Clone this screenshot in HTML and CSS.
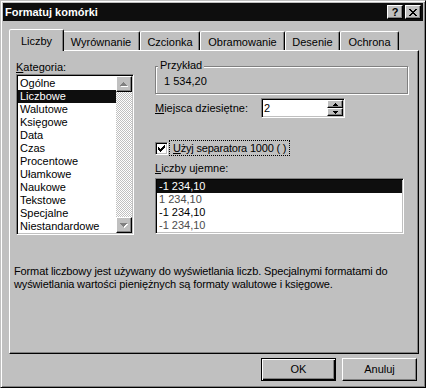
FILE: index.html
```html
<!DOCTYPE html>
<html lang="pl">
<head>
<meta charset="utf-8">
<title>Formatuj komórki</title>
<link rel="stylesheet" href="styles.css">
</head>
<body>
<div class="window">
  <div class="titlebar">
    <span class="title">Formatuj komórki</span>
    <div class="title-btns">
      <span class="tbtn help">?</span>
      <span class="tbtn close"><svg width="8" height="7" viewBox="0 0 8 7" shape-rendering="crispEdges"><path d="M0 0h2v1H0z M6 0h2v1H6z M1 1h2v1H1z M5 1h2v1H5z M2 2h4v1H2z M3 3h2v1H3z M2 4h4v1H2z M1 5h2v1H1z M5 5h2v1H5z M0 6h2v1H0z M6 6h2v1H6z" fill="#000"/></svg></span>
    </div>
  </div>
  <div class="content">
    <div class="tabs">
      <div class="tab active t-liczby">Liczby</div>
      <div class="tab t-wyr">Wyrównanie</div>
      <div class="tab t-czc">Czcionka</div>
      <div class="tab t-obr">Obramowanie</div>
      <div class="tab t-des">Desenie</div>
      <div class="tab t-och">Ochrona</div>
    </div>
    <div class="panel">
      <div class="cols">
        <div class="col-left">
          <div class="label"><u>K</u>ategoria:</div>
          <div class="listbox cat">
            <ul class="items">
              <li>Ogólne</li>
              <li class="sel">Liczbowe</li>
              <li>Walutowe</li>
              <li>Księgowe</li>
              <li>Data</li>
              <li>Czas</li>
              <li>Procentowe</li>
              <li>Ułamkowe</li>
              <li>Naukowe</li>
              <li>Tekstowe</li>
              <li>Specjalne</li>
              <li>Niestandardowe</li>
            </ul>
            <div class="vscroll">
              <span class="sbtn"><svg width="8" height="5" viewBox="0 0 8 5" shape-rendering="crispEdges"><path d="M4 1h1v1H4z M3 2h3v1H3z M2 3h5v1H2z M1 4h7v1H1z" fill="#fff"/><path d="M3 0h1v1H3z M2 1h3v1H2z M1 2h5v1H1z M0 3h7v1H0z" fill="#808080"/></svg></span>
              <span class="track"></span>
              <span class="sbtn"><svg width="8" height="5" viewBox="0 0 8 5" shape-rendering="crispEdges"><path d="M1 1h7v1H1z M2 2h5v1H2z M3 3h3v1H3z M4 4h1v1H4z" fill="#fff"/><path d="M0 0h7v1H0z M1 1h5v1H1z M2 2h3v1H2z M3 3h1v1H3z" fill="#808080"/></svg></span>
            </div>
          </div>
        </div>
        <div class="col-right">
          <div class="group">
            <div class="group-title">Przykład</div>
            <div class="sample">1 534,20</div>
          </div>
          <div class="spin-row">
            <span class="spin-label"><u>M</u>iejsca dziesiętne:</span>
            <div class="spin">
              <span class="spin-value">2</span>
              <div class="spin-btns">
                <span class="sp"><svg width="5" height="3" viewBox="0 0 5 3" shape-rendering="crispEdges"><path d="M2 0h1v1H2z M1 1h3v1H1z M0 2h5v1H0z" fill="#000"/></svg></span>
                <span class="sp"><svg width="5" height="3" viewBox="0 0 5 3" shape-rendering="crispEdges"><path d="M0 0h5v1H0z M1 1h3v1H1z M2 2h1v1H2z" fill="#000"/></svg></span>
              </div>
            </div>
          </div>
          <div class="check-row">
            <span class="checkbox"><svg width="7" height="7" viewBox="0 0 7 7" shape-rendering="crispEdges"><path d="M0 2h1v3H0z M1 3h1v3H1z M2 4h1v3H2z M3 3h1v3H3z M4 2h1v3H4z M5 1h1v3H5z M6 0h1v3H6z" fill="#000"/></svg></span>
            <span class="check-label"><u>U</u>żyj separatora 1000 ( )</span>
          </div>
          <div class="label neg-label"><u>L</u>iczby ujemne:</div>
          <ul class="listbox neg">
            <li class="sel">-1 234,10</li>
            <li class="red">1 234,10</li>
            <li>-1 234,10</li>
            <li class="red">-1 234,10</li>
          </ul>
        </div>
      </div>
      <p class="desc">Format liczbowy jest używany do wyświetlania liczb. Specjalnymi formatami do<br>wyświetlania wartości pieniężnych są formaty walutowe i księgowe.</p>
    </div>
    <div class="buttons">
      <button class="btn default">OK</button>
      <button class="btn">Anuluj</button>
    </div>
  </div>
</div>
</body>
</html>
```
FILE: styles.css
```css
* { box-sizing: border-box; }
html, body { margin: 0; padding: 0; }
body {
  width: 426px;
  height: 388px;
  overflow: hidden;
  background: #c0c0c0;
  font-family: "Liberation Sans", Arial, sans-serif;
  font-size: 11px;
  line-height: 13px;
  color: #000;
}
u { text-decoration: underline; text-underline-offset: 1px; }

.window {
  width: 426px;
  height: 388px;
  border: 1px solid;
  border-color: #c0c0c0 #000 #000 #c0c0c0;
  box-shadow: inset 1px 1px #fff, inset -1px -1px #808080;
  padding: 2px;
  display: flex;
  flex-direction: column;
}

.titlebar {
  height: 18px;
  background: #0e0e0e;
  display: flex;
  align-items: center;
  justify-content: space-between;
  padding: 0 2px 0 2px;
}
.title { color: #fff; font-weight: bold; font-size: 11px; }
.title-btns { display: flex; gap: 2px; }
.tbtn {
  width: 16px;
  height: 14px;
  background: #c0c0c0;
  border: 1px solid;
  border-color: #fff #000 #000 #fff;
  box-shadow: inset -1px -1px #808080;
  display: flex;
  align-items: center;
  justify-content: center;
}
.help { font-weight: bold; font-size: 11px; line-height: 12px; }

.content { padding: 8px 4px 0 6px; }

.tabs {
  display: flex;
  align-items: flex-end;
  height: 21px;
  padding-left: 2px;
}
.tab {
  height: 19px;
  border: 1px solid;
  border-bottom: 0;
  border-color: #fff #000 transparent #fff;
  border-radius: 2px 2px 0 0;
  box-shadow: inset -1px 0 #808080;
  padding-top: 4px;
  text-align: center;
  background: #c0c0c0;
  white-space: nowrap;
}
.tab.active {
  height: 22px;
  margin: 0 -2px -1px;
  padding-top: 5px;
  z-index: 1;
}
.t-liczby { width: 55px; }
.t-wyr { width: 78px; }
.t-czc { width: 60px; }
.t-obr { width: 85px; }
.t-des { width: 55px; }
.t-och { width: 59px; }

.panel {
  height: 304px;
  border: 1px solid;
  border-color: #fff #000 #000 #fff;
  box-shadow: inset -1px -1px #808080;
}
.cols { display: flex; padding: 10px 0 0 6px; }
.col-left { width: 118px; }
.col-right { margin-left: 21px; width: 254px; }

.listbox {
  background: #fff;
  border: 1px solid;
  border-color: #808080 #fff #fff #808080;
  box-shadow: inset 1px 1px #000, inset -1px -1px #c0c0c0;
  padding: 1px;
  margin: 0;
  list-style: none;
}
.cat { display: flex; height: 161px; }
.items { list-style: none; margin: 0; padding: 1px 0 0; flex: 1; }
.items li, .neg li { height: 13px; padding-left: 2px; white-space: nowrap; }
.sel { background: #0e0e0e; color: #fff; }
.red { color: #4c4c4c; }

.vscroll { width: 16px; display: flex; flex-direction: column; }
.sbtn {
  height: 16px;
  background: #c0c0c0;
  border: 1px solid;
  border-color: #fff #000 #000 #fff;
  box-shadow: inset -1px -1px #808080;
  display: flex;
  align-items: center;
  justify-content: center;
}
.track {
  flex: 1;
  background: conic-gradient(#fff 25%, #c0c0c0 0 50%, #fff 0 75%, #c0c0c0 0) 0 0 / 2px 2px;
}

.group {
  margin-top: 5px;
  height: 28px;
  width: 253px;
  border: 1px solid #808080;
  box-shadow: 1px 1px 0 #fff, inset 1px 1px 0 #fff;
}
.group-title {
  width: fit-content;
  margin: -8px 0 0 2px;
  padding: 0 2px;
  background: #c0c0c0;
}
.sample { margin: 3px 0 0 8px; }

.spin-row { display: flex; align-items: center; margin-top: 4px; height: 20px; }
.spin-label { width: 106px; }
.spin {
  width: 84px;
  height: 20px;
  background: #fff;
  border: 1px solid;
  border-color: #808080 #fff #fff #808080;
  box-shadow: inset 1px 1px #000, inset -1px -1px #c0c0c0;
  padding: 1px;
  display: flex;
}
.spin-value { flex: 1; padding-left: 1px; line-height: 16px; }
.spin-btns { width: 16px; display: flex; flex-direction: column; }
.sp {
  height: 8px;
  background: #c0c0c0;
  border: 1px solid;
  border-color: #fff #000 #000 #fff;
  box-shadow: inset -1px -1px #808080;
  display: flex;
  align-items: center;
  justify-content: center;
}

.check-row { display: flex; align-items: center; margin-top: 22px; height: 16px; }
.checkbox {
  width: 13px;
  height: 13px;
  background: #fff;
  border: 1px solid;
  border-color: #808080 #fff #fff #808080;
  box-shadow: inset 1px 1px #000, inset -1px -1px #c0c0c0;
  display: flex;
  align-items: center;
  justify-content: center;
}
.check-label {
  margin-left: 1px;
  border: 1px dotted #000;
  padding: 0 3px;
  line-height: 14px;
  letter-spacing: -0.2px;
}
.neg-label { margin-top: 6px; }
.neg { height: 56px; width: 249px; margin-top: 3px; }

.desc { margin: 30px 0 0 4px; white-space: nowrap; letter-spacing: -0.13px; }

.buttons {
  display: flex;
  justify-content: flex-end;
  gap: 6px;
  margin-top: 4px;
  padding-right: 2px;
}
.btn {
  width: 75px;
  height: 23px;
  font: inherit;
  color: #000;
  background: #c0c0c0;
  border: 1px solid;
  border-color: #fff #000 #000 #fff;
  box-shadow: inset -1px -1px #808080;
  padding: 0;
}
.btn.default {
  border-color: #000;
  box-shadow: inset 1px 1px #fff, inset -1px -1px #000, inset -2px -2px #808080;
}
```
